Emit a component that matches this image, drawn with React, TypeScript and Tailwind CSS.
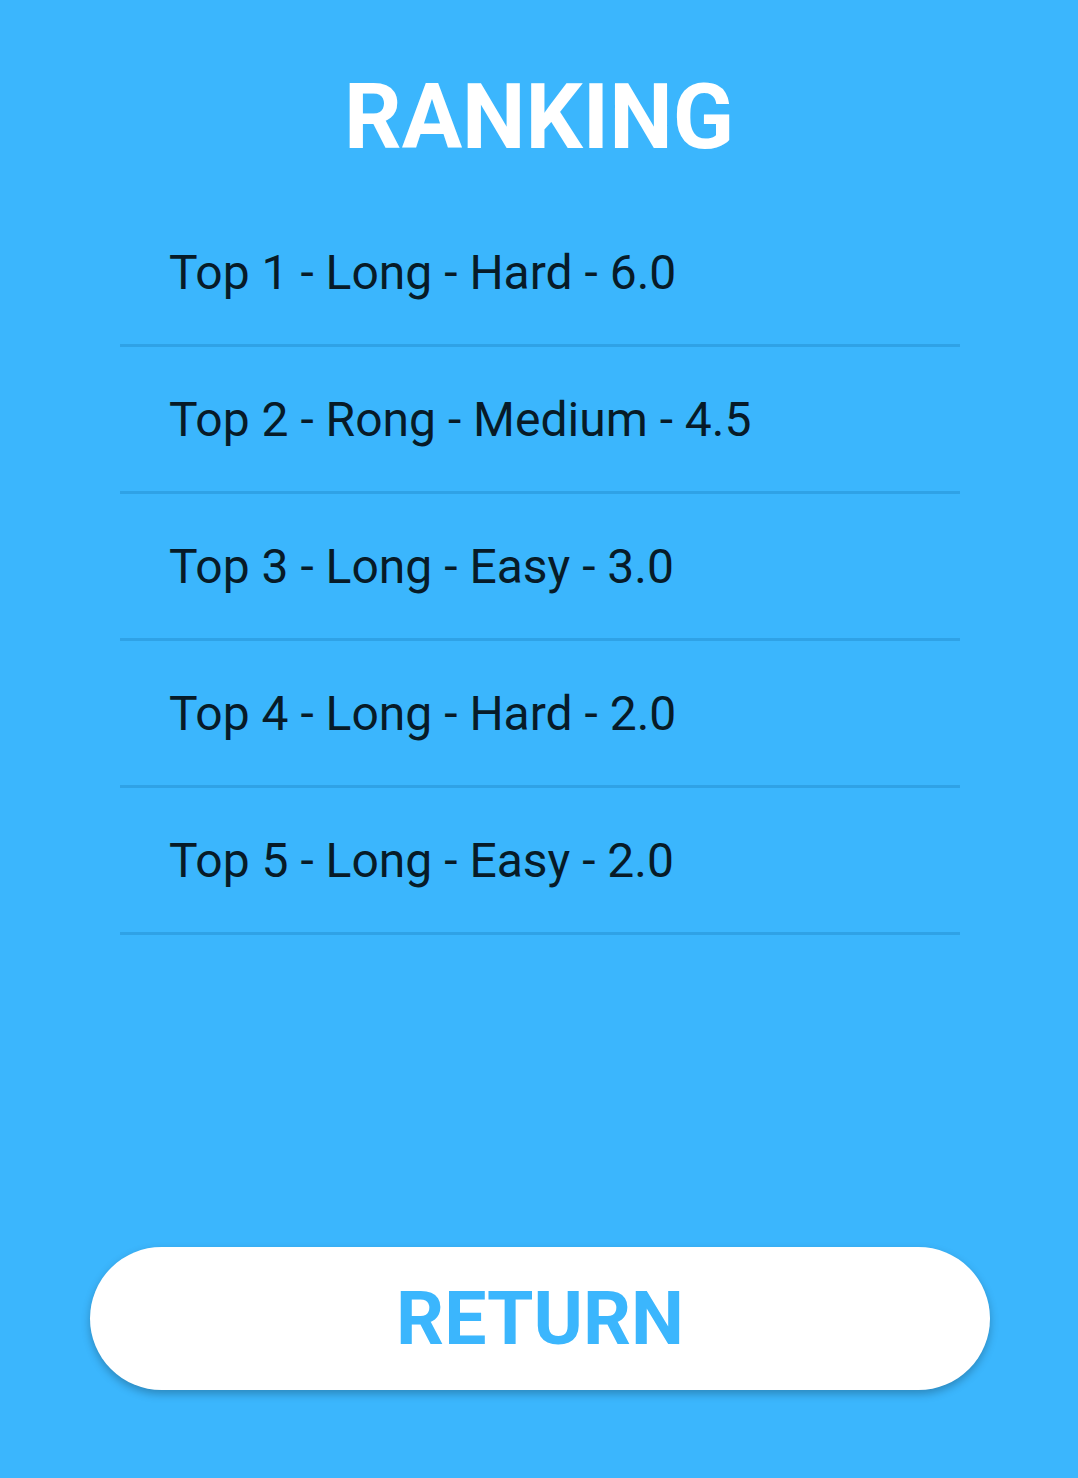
const rows = [
  "Top 1 - Long - Hard - 6.0",
  "Top 2 - Rong - Medium - 4.5",
  "Top 3 - Long - Easy - 3.0",
  "Top 4 - Long - Hard - 2.0",
  "Top 5 - Long - Easy - 2.0",
];

export default function App() {
  return (
    <div
      className="flex h-[1478px] w-full flex-col bg-[#3bb6fd]"
      style={{ fontFamily: "Roboto, 'Noto Sans', sans-serif" }}
    >
      <h1 className="pt-[63px] text-center text-[90px] font-bold leading-[110px] text-white">
        RANKING
      </h1>

      <ul className="ml-[120px] mt-[27px] w-[840px]">
        {rows.map((row) => (
          <li
            key={row}
            className="flex h-[147px] items-center border-b-[3px] border-[#2fa2e6] pl-[49px] pt-[2px] text-[48px] leading-none text-[#071b28]"
          >
            {row}
          </li>
        ))}
      </ul>

      <div className="mt-auto mb-[88px] ml-[90px] w-[900px]">
        <button className="flex h-[143px] w-full items-center justify-center rounded-full bg-white text-[75px] font-bold text-[#3bb6fd] shadow-[0_4px_8px_rgba(0,0,0,0.25)]">
          RETURN
        </button>
      </div>
    </div>
  );
}
